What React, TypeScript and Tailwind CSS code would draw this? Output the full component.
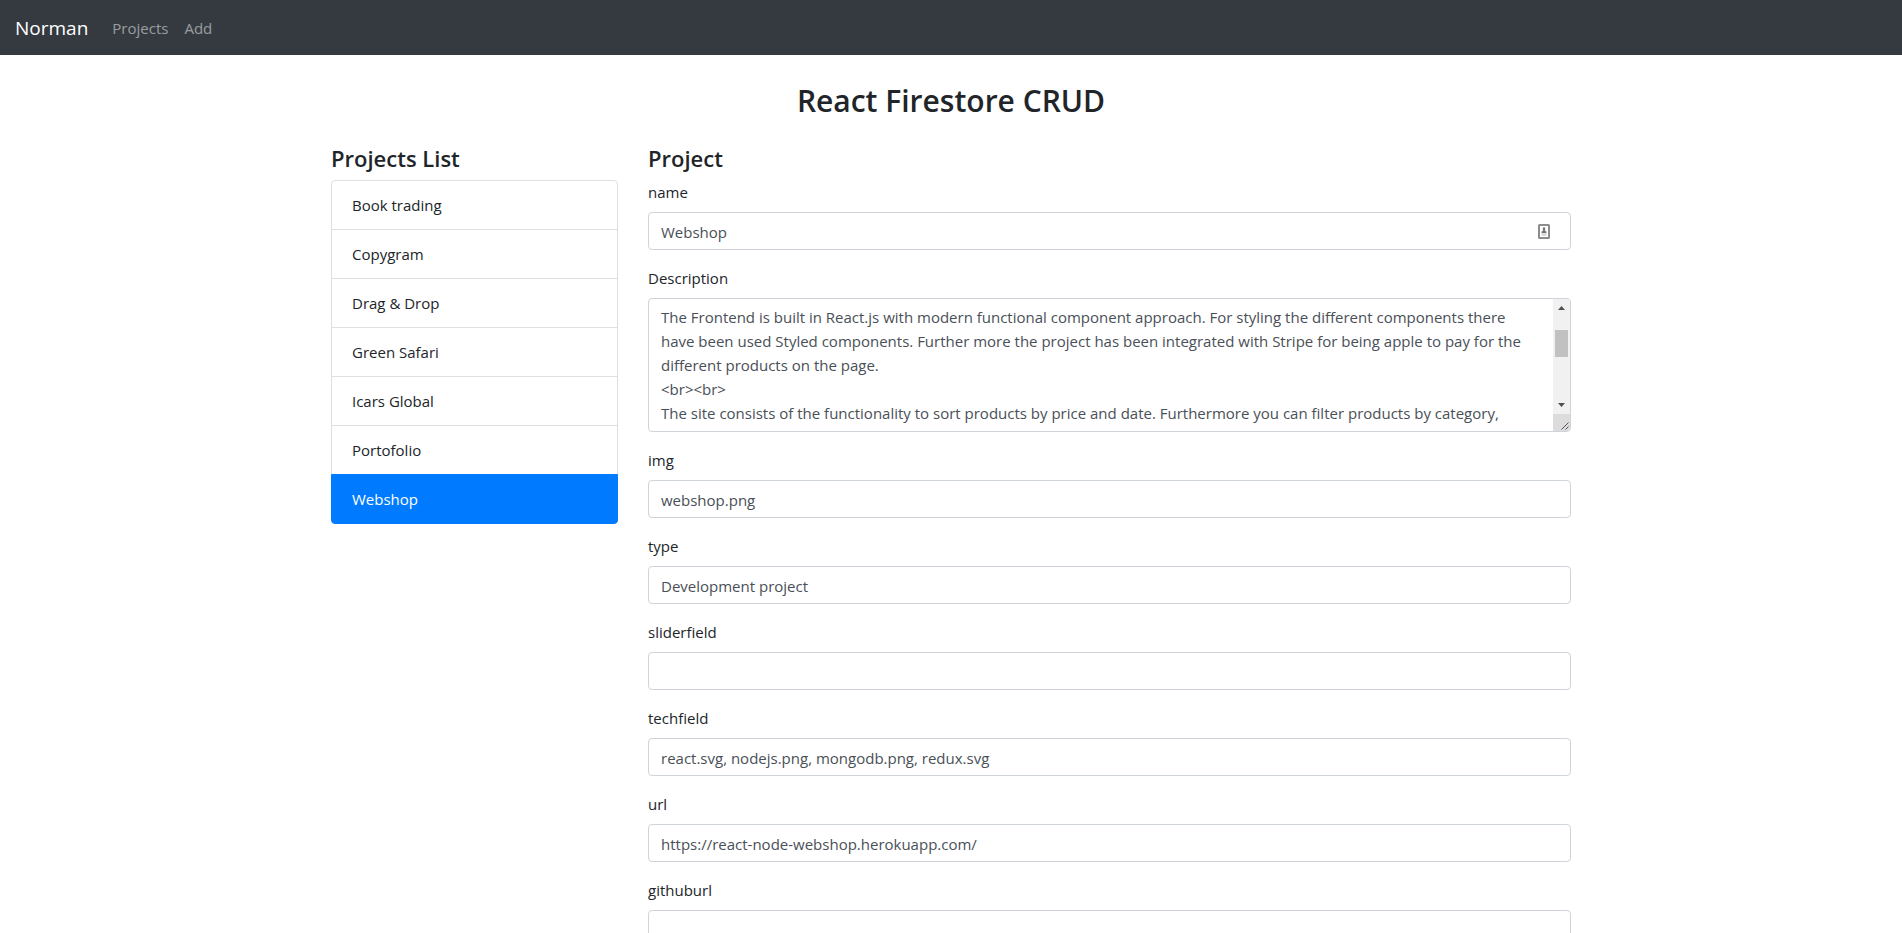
import React from "react";

const projects = ["Book trading", "Copygram", "Drag & Drop", "Green Safari", "Icars Global", "Portofolio", "Webshop"];

const description = `The Frontend is built in React.js with modern functional component approach. For styling the different components there
have been used Styled components. Further more the project has been integrated with Stripe for being apple to pay for the
different products on the page.
<br><br>
The site consists of the functionality to sort products by price and date. Furthermore you can filter products by category,`;

const fields = [
  { name: "img", value: "webshop.png" },
  { name: "type", value: "Development project" },
  { name: "sliderfield", value: "" },
  { name: "techfield", value: "react.svg, nodejs.png, mongodb.png, redux.svg" },
  { name: "url", value: "https://react-node-webshop.herokuapp.com/" },
  { name: "githuburl", value: "" },
];

function Field({ name, value, children }: { name: string; value: string; children?: React.ReactNode }) {
  return (
    <div className="relative mb-4">
      <label htmlFor={name} className="mb-2 block">{name}</label>
      <input
        id={name}
        defaultValue={value}
        className="block h-[38px] w-full rounded border border-[#ced4da] bg-white px-3 pt-0.5 text-[#495057] outline-none"
      />
      {children}
    </div>
  );
}

function ContactIcon() {
  return (
    <svg viewBox="0 0 12 15" className="absolute right-[21px] bottom-[11px] h-[15px] w-3" aria-hidden="true">
      <rect x="1" y="1" width="10" height="13" rx="0.5" fill="#fff" stroke="#8c8c8c" strokeWidth="2" />
      <path d="M6 3.2c.8 0 1.300.7 1.300 1.500 0 .7-.3 1.100-.5 1.500l1.700 1.600v1.400h-5V7.800l1.700-1.600c-.2-.4-.5-.8-.5-1.500 0-.8.5-1.500 1.300-1.500z" fill="#777" />
      <path d="M3.500 11h5" stroke="#b5b5b5" />
    </svg>
  );
}

function ScrollBar() {
  return (
    <div className="flex w-[17px] shrink-0 flex-col bg-[#f1f1f1]" aria-hidden="true">
      <svg viewBox="0 0 17 17" className="h-[17px] w-[17px]"><path d="M5 11h7l-3.500-4z" fill="#505050" /></svg>
      <div className="mx-[2px] mt-[14px] h-[27px] bg-[#c1c1c1]" />
      <svg viewBox="0 0 17 17" className="mt-auto h-[17px] w-[17px]"><path d="M5 6h7l-3.500 4z" fill="#505050" /></svg>
      <svg viewBox="0 0 17 17" className="h-[17px] w-[17px] bg-[#dcdcdc]">
        <path d="M8.500 15.500l7-7M12.500 15.500l3-3" stroke="#555" fill="none" />
      </svg>
    </div>
  );
}

export default function App() {
  return (
    <div className="h-screen overflow-hidden bg-white font-['Open_Sans','Noto_Sans',sans-serif] text-[15px] leading-6 text-[#212529]">
      <nav className="flex h-[55px] items-center bg-[#343a40] px-[15px]">
        <a href="#" className="mr-4 text-[19px] leading-[30px] text-white">Norman</a>
        <a href="#projects" className="p-2 text-white/50">Projects</a>
        <a href="#add" className="p-2 text-white/50">Add</a>
      </nav>
      <main className="mx-auto w-full max-w-[1240px]">
        <h2 className="mt-[27px] mb-6 text-center text-[30px] leading-[38px] font-semibold">React Firestore CRUD</h2>
        <div className="grid grid-cols-[287px_minmax(0,1fr)] gap-x-[30px]">
          <section>
            <h4 className="mb-[7px] text-[22px] leading-[29px] font-semibold">Projects List</h4>
            <ul>
              {projects.map((p) => (
                <li key={p} className="-mt-px border border-[#dfdfdf] first:mt-0 first:rounded-t last:rounded-b last:border-[#007bff] last:bg-[#007bff] last:text-white">
                  <button type="button" className="block w-full px-5 py-3 text-left">{p}</button>
                </li>
              ))}
            </ul>
          </section>
          <form>
            <h4 className="mb-[7px] text-[22px] leading-[29px] font-semibold">Project</h4>
            <Field name="name" value="Webshop"><ContactIcon /></Field>
            <div className="mb-4">
              <label htmlFor="description" className="mb-2 block">Description</label>
              <div className="flex h-[134px] overflow-hidden rounded border border-[#ced4da]">
                <textarea
                  id="description"
                  defaultValue={description}
                  className="block min-w-0 flex-1 resize-none overflow-hidden py-[6px] pl-3 text-[#495057] outline-none"
                />
                <ScrollBar />
              </div>
            </div>
            {fields.map((f) => <Field key={f.name} name={f.name} value={f.value} />)}
          </form>
        </div>
      </main>
    </div>
  );
}
